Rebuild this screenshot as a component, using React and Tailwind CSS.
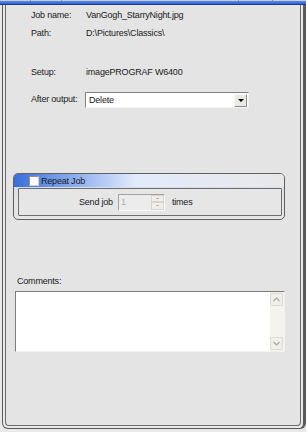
import React from "react";

function DownTri({ color = "#000", w = 7, h = 4 }) {
  return (
    <svg width={w} height={h} viewBox={`0 0 ${w} ${h}`}>
      <polygon points={`0,0 ${w},0 ${w / 2},${h}`} fill={color} />
    </svg>
  );
}

function Chevron({ up }) {
  return (
    <svg width="7" height="5" viewBox="0 0 7 5">
      <polyline
        points={up ? "0.5,4 3.5,1 6.5,4" : "0.5,1 3.5,4 6.5,1"}
        fill="none"
        stroke="#a8a8a8"
        strokeWidth="1.2"
      />
    </svg>
  );
}

export default function App() {
  return (
    <div className="w-[306px] h-[432px] bg-[#e9e9e9] flex flex-col font-['Liberation_Sans',Arial,sans-serif] text-[9px] tracking-[-0.2px] text-[#1a1a1a] overflow-hidden leading-[12px]">
      <div className="h-[1px] bg-[#c9ccd4] flex">
        <div className="w-[30px]" />
        <div className="w-[1px] bg-[#8a8f9a]" />
        <div className="w-[30px]" />
        <div className="w-[1px] bg-[#8a8f9a]" />
        <div className="w-[176px]" />
        <div className="w-[1px] bg-[#8a8f9a]" />
        <div className="w-[33px]" />
        <div className="w-[1px] bg-[#8a8f9a]" />
      </div>
      <div className="h-[3px] bg-gradient-to-b from-[#5a8ae6] to-[#2f62d0]" />
      <div className="h-[1px] bg-[#1c3a86]" />
      <div className="flex-1 flex pl-[2px] pb-[3px]">
        <div className="flex-1 flex border-l border-r-[3px] border-b border-[#5a5a5a] rounded-b-[6px] px-[2px] pb-[2px]">
          <div className="flex-1 flex flex-col border-l border-r border-b border-[#6a6a6a] rounded-b-[4px] bg-[#e4e4e4] pt-[4px]">
            <div className="h-[12px] flex items-center">
              <span className="ml-[25px] w-[55px]">Job name:</span>
              <span>VanGogh_StarryNight.jpg</span>
            </div>
            <div className="h-[12px] flex items-center mt-[6px]">
              <span className="ml-[25px] w-[55px]">Path:</span>
              <span>D:\Pictures\Classics\</span>
            </div>
            <div className="h-[12px] flex items-center mt-[27px]">
              <span className="ml-[25px] w-[55px]">Setup:</span>
              <span>imagePROGRAF W6400</span>
            </div>
            <div className="h-[16px] flex items-center mt-[14px]">
              <span className="ml-[25px] w-[54px] -mt-[2px]">After output:</span>
              <div className="w-[164px] h-[16px] flex items-center bg-white border-t border-l border-[#828282] border-r border-b border-r-[#f4f4f4] border-b-[#f4f4f4]">
                <span className="ml-[3px] flex-1">Delete</span>
                <div className="w-[13px] h-[13px] mr-[1px] flex items-center justify-center bg-[#ebe9e2] border-t border-l border-[#f8f8f8] border-r border-b border-r-[#8a8a8a] border-b-[#8a8a8a]">
                  <DownTri w={6} h={3} />
                </div>
              </div>
            </div>

            <div className="mt-[65px] ml-[7px] w-[272px] h-[47px] border border-[#606060] rounded-[5px] overflow-hidden flex flex-col bg-[linear-gradient(180deg,#c9d7f3_0px,#e6e6e6_30px)]">
              <div className="h-[13px] flex items-center pl-[15px] bg-gradient-to-r from-[#3a6ed8] via-[#e2ebfb] via-45% to-[#e8e8e8]">
                <div className="w-[10px] h-[10px] bg-white border-t border-l border-[#8e8e8e] border-r border-b border-r-[#d0d0d0] border-b-[#d0d0d0]" />
                <span className="ml-[2px]">Repeat Job</span>
              </div>
              <div className="mt-[1px] ml-[4px] mr-[2px] h-[28px] border border-[#6e6e6e] rounded-[1px] bg-[#e6e6e6] flex items-center pl-[60px]">
                <span>Send job</span>
                <div className="ml-[5px] w-[47px] h-[17px] flex bg-[#ececec] border-t border-l border-[#a3a3a3] border-r border-b border-r-[#fafafa] border-b-[#fafafa]">
                  <span className="pl-[2px] text-[#ababab] flex-1 leading-[14px]">1</span>
                  <div className="w-[13px] flex flex-col">
                    <div className="flex-1 bg-[#efeee8] border border-[#d6d5ce] flex items-center justify-center">
                      <div className="w-[3px] h-[1px] bg-[#b8b8b8]" />
                    </div>
                    <div className="flex-1 bg-[#efeee8] border border-[#d6d5ce] flex items-center justify-center">
                      <div className="w-[3px] h-[1px] bg-[#b8b8b8]" />
                    </div>
                  </div>
                </div>
                <span className="ml-[7px]">times</span>
              </div>
            </div>

            <div className="h-[12px] flex items-center mt-[55px] ml-[11px]">
              <span>Comments:</span>
            </div>
            <div className="mt-[4px] ml-[9px] w-[270px] h-[61px] flex bg-white border-t border-l border-[#7c7c7c] border-r border-b border-r-[#f2f2f2] border-b-[#f2f2f2]">
              <div className="flex-1" />
              <div className="w-[14px] bg-[#f4f3ee] flex flex-col justify-between py-[1px] pr-[1px]">
                <div className="h-[13px] bg-[#f0efea] border border-[#dcdbd4] rounded-[1px] flex items-center justify-center">
                  <Chevron up />
                </div>
                <div className="h-[13px] bg-[#f0efea] border border-[#dcdbd4] rounded-[1px] flex items-center justify-center">
                  <Chevron />
                </div>
              </div>
            </div>
          </div>
        </div>
      </div>
    </div>
  );
}
